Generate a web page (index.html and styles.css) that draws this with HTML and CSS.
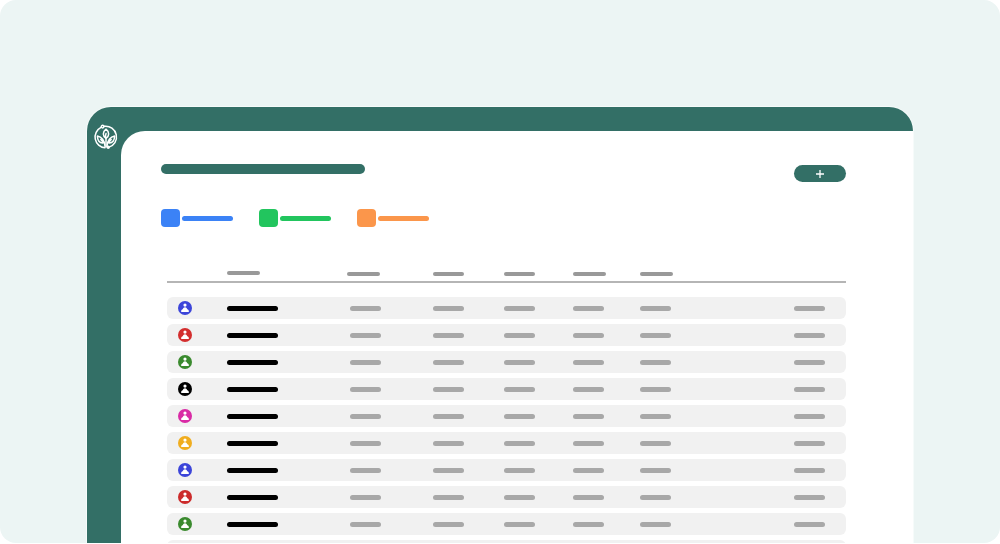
FILE: index.html
```
<!DOCTYPE html>
<html lang="en">
<head>
    <meta charset="UTF-8">
    <meta name="viewport" content="width=device-width, initial-scale=1.0">
    <title>Dashboard</title>
    <link rel="stylesheet" href="styles.css">
</head>
<body>
    <svg class="symbols" aria-hidden="true">
        <symbol id="user" viewBox="0 0 14 14">
            <circle cx="7" cy="7" r="7" fill="currentColor"/>
            <circle cx="7" cy="4.1" r="1.6" fill="#fff"/>
            <path d="M3.2 10.9V9.900C3.200 9 4.200 8.700 4.800 8C5.400 7 5.800 6.300 7 6.300S8.600 7 9.200 8C9.800 8.700 10.800 9 10.800 9.900V10.900z" fill="#fff"/>
        </symbol>
    </svg>

    <div class="stage">
        <div class="window">
            <aside class="sidebar">
                <svg class="logo" viewBox="0 0 24 24" fill="none" stroke="#fff" stroke-width="1.5" stroke-linecap="round" stroke-linejoin="round">
                    <path d="M10.200 1.300A10.800 10.800 0 0 1 14.600 22.400"/>
                    <path d="M7 2.400A10.800 10.800 0 0 0 11 22.800"/>
                    <circle cx="8.600" cy="1.600" r="1.300"/>
                    <path d="M12 13.500C8.500 11 8.400 7 12 4.200C15.600 7 15.500 11 12 13.500C11.300 12 11.300 10.500 12 8.500"/>
                    <path d="M12 13.500V22"/>
                    <path d="M11 21.500C10.800 15.500 7.500 11.600 3.400 11C3.400 15.500 5.500 18.300 9 18C8.800 16.500 8 15.500 6.800 14.500"/>
                    <path d="M13 21.500C13.200 15.500 16.500 11.600 20.600 11C20.600 15.500 18.500 18.300 15 18C15.200 16.500 16 15.500 17.200 14.500"/>
                    <circle cx="14.200" cy="22.200" r="1"/>
                </svg>
            </aside>

            <main class="content">
                <header class="top">
                    <div class="title"></div>
                    <button class="add" type="button" aria-label="Add">
                        <svg viewBox="0 0 8 8" stroke="#fff" stroke-width="1.300"><path d="M4 0v8M0 4h8"/></svg>
                    </button>
                </header>

                <div class="tags">
                    <div class="tag blue"><i></i><b></b></div>
                    <div class="tag green"><i></i><b></b></div>
                    <div class="tag orange"><i></i><b></b></div>
                </div>

                <table>
                    <colgroup>
                        <col class="col-icon"><col class="col-name"><col class="col-a"><col class="col-b"><col class="col-c"><col class="col-d"><col><col class="col-last">
                    </colgroup>
                    <thead>
                        <tr>
                            <th></th>
                            <th class="raised"><span class="bar wide"></span></th>
                            <th><span class="bar wide"></span></th>
                            <th><span class="bar"></span></th>
                            <th><span class="bar"></span></th>
                            <th><span class="bar wide"></span></th>
                            <th><span class="bar wide"></span></th>
                            <th></th>
                        </tr>
                    </thead>
                    <tbody id="rows"></tbody>
                </table>
            </main>
        </div>
    </div>

    <script>
        const colors = ['#3c45d9', '#d32d2d', '#3a8a2e', '#000000', '#d92aa5', '#f0ad1f', '#3c45d9', '#cc2b2b', '#3a8a2e', '#000000'];
        const rows = document.getElementById('rows');

        colors.forEach(color => {
            const tr = document.createElement('tr');
            tr.innerHTML = `<td><svg class="avatar" style="color: ${color}"><use href="#user"/></svg></td>
                <td><span class="bar name"></span></td>` + '<td><span class="bar"></span></td>'.repeat(6);
            rows.appendChild(tr);
        });
    </script>
</body>
</html>
```
FILE: styles.css
```
* {
    box-sizing: border-box;
}
body {
    margin: 0;
    background: white;
    font-family: "Liberation Sans", Arial, sans-serif;
}
.symbols {
    display: none;
}
.stage {
    height: calc(100vh - 1px);
    padding: 107px 87px 0;
    background: #ecf5f4;
    border-radius: 16px;
    overflow: hidden;
}
.window {
    display: flex;
    min-height: 100%;
    background: #336f66;
    border-radius: 24px 24px 0 0;
    box-shadow: 0 0 0 1px #f6fbfa;
    overflow: hidden;
}
.sidebar {
    width: 34px;
    padding: 18px 0 0 7px;
}
.logo {
    display: block;
    width: 24px;
    height: 24px;
    overflow: visible;
}
.content {
    flex: 1;
    margin-top: 24px;
    padding: 33px 67px 0 40px;
    background: white;
    border-top-left-radius: 24px;
}
.top {
    display: flex;
    justify-content: space-between;
    align-items: flex-start;
}
.title {
    width: 204px;
    height: 10px;
    border-radius: 5px;
    background: #336f66;
}
.add {
    display: flex;
    align-items: center;
    justify-content: center;
    width: 52px;
    height: 17px;
    margin-top: 1px;
    padding: 0;
    border: none;
    border-radius: 9px;
    background: #336f66;
    cursor: pointer;
}
.add svg {
    width: 8px;
    height: 8px;
}
.tags {
    display: flex;
    gap: 26px;
    margin-top: 27px;
}
.tag {
    display: flex;
    align-items: center;
    gap: 2px;
}
.tag i {
    width: 19px;
    height: 18px;
    border-radius: 4px;
    background: currentColor;
}
.tag b {
    width: 51px;
    height: 5px;
    border-radius: 3px;
    background: currentColor;
}
.blue {
    color: #3b82f6;
}
.green {
    color: #22c55e;
}
.orange {
    color: #fb964b;
}
table {
    width: calc(100% - 6px);
    margin: 39px 0 0 6px;
    table-layout: fixed;
    border-collapse: separate;
    border-spacing: 0 5px;
}
.col-icon {
    width: 60px;
}
.col-name {
    width: 120px;
}
.col-a {
    width: 86px;
}
.col-b {
    width: 71px;
}
.col-c {
    width: 69px;
}
.col-d {
    width: 67px;
}
.col-last {
    width: 52px;
}
th {
    height: 12px;
    padding: 0 0 5px;
    border-bottom: 2px solid #b5b5b5;
    vertical-align: bottom;
    line-height: 0;
}
th.raised {
    padding-bottom: 6px;
}
td {
    height: 22px;
    padding: 0;
    background: #f1f1f1;
    vertical-align: middle;
    line-height: 0;
}
td:first-child {
    padding-left: 11px;
    border-radius: 6px 0 0 6px;
}
td:last-child {
    border-radius: 0 6px 6px 0;
}
td:nth-child(3) {
    padding-left: 3px;
}
/* space between the header line and the first row */
tbody::before {
    content: "";
    display: block;
    height: 4px;
}
.bar {
    display: block;
    width: 31px;
    height: 5px;
    border-radius: 3px;
    background: #a8a8a8;
}
th .bar {
    height: 4px;
    background: #999999;
}
.bar.wide {
    width: 33px;
}
.bar.name {
    width: 51px;
    background: black;
}
.avatar {
    display: block;
    width: 14px;
    height: 14px;
}
```
